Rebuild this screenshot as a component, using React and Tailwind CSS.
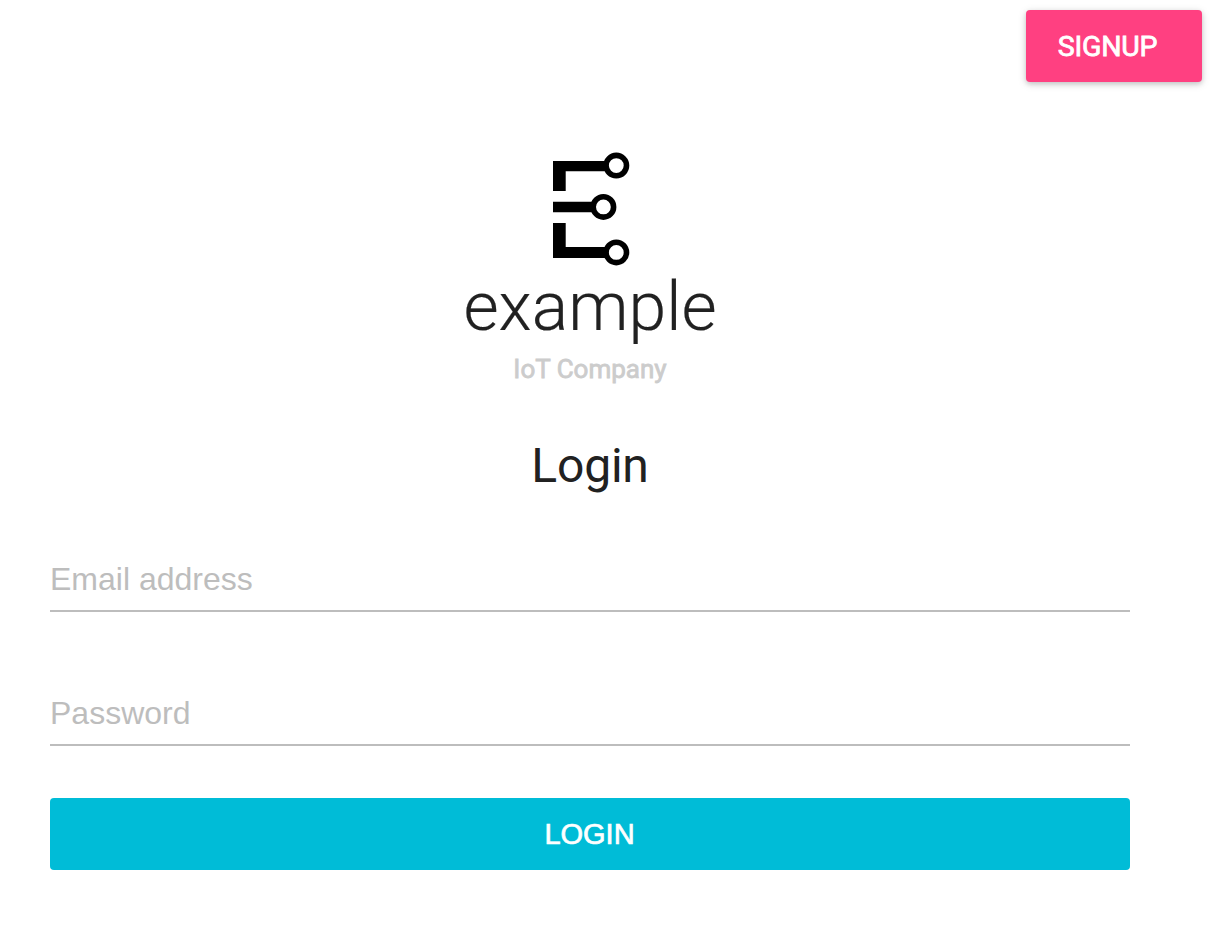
function Logo() {
  return (
    <svg className="block h-[114px] w-[78px] overflow-visible" viewBox="0 0 78 114" fill="none" stroke="#000">
      <path d="M2 39V9H54V19.200H14.700V39Z" fill="#000" stroke="none" />
      <path d="M2 49.800H42V60.200H2Z" fill="#000" stroke="none" />
      <path d="M2 71H14.700V95H54V106H2Z" fill="#000" stroke="none" />
      <circle cx="65.300" cy="13.600" r="10.200" strokeWidth="5.600" />
      <circle cx="52.400" cy="54.900" r="10.200" strokeWidth="5.600" />
      <circle cx="65.300" cy="100.400" r="10.200" strokeWidth="5.600" />
    </svg>
  );
}

function Field({ type, label }) {
  return (
    <input
      type={type}
      placeholder={label}
      aria-label={label}
      className="block h-16 w-full border-b-2 border-[#bdbdbd] bg-transparent font-['Liberation_Sans',sans-serif] text-[32px] leading-[38px] text-[#212121] outline-none placeholder:text-[#bdbdbd]"
    />
  );
}

export default function App() {
  return (
    <div className="flex h-[936px] w-[1216px] flex-col overflow-hidden bg-white font-[Roboto,sans-serif] text-[#212121]">
      <header className="flex justify-end pt-[10px] pr-[14px]">
        <button className="h-[72px] w-44 rounded-[4px] bg-[#ff4081] pt-px pr-[13px] text-[28.500px] leading-[71px] tracking-[-0.2px] text-white shadow-[0_2px_10px_rgba(0,0,0,0.12),0_2px_5px_rgba(0,0,0,0.16)] [-webkit-text-stroke:0.8px_currentColor]">
          SIGNUP
        </button>
      </header>
      <main className="ml-[50px] flex w-[1080px] flex-col items-center pt-[70px]">
        <Logo />
        <div className="mt-[3px] h-[85px] text-[68px] font-light leading-[76px] [-webkit-text-stroke:0.2px_currentColor]">example</div>
        <p className="text-[26px] leading-[30px] text-[#cccccc] [-webkit-text-stroke:0.8px_currentColor]">IoT Company</p>
        <h1 className="mt-[52px] text-[48px] leading-[60px] tracking-[-0.2px]">Login</h1>
        <form className="mt-[52px] w-full" onSubmit={(event) => event.preventDefault()}>
          <Field type="email" label="Email address" />
          <div className="mt-[70px]">
            <Field type="password" label="Password" />
          </div>
          <button className="mt-[52px] block h-[72px] w-full rounded-[4px] bg-[#00bcd7] pr-px font-['Liberation_Sans',sans-serif] text-[29px] leading-[72px] text-white [-webkit-text-stroke:0.7px_currentColor]">
            LOGIN
          </button>
        </form>
      </main>
    </div>
  );
}
